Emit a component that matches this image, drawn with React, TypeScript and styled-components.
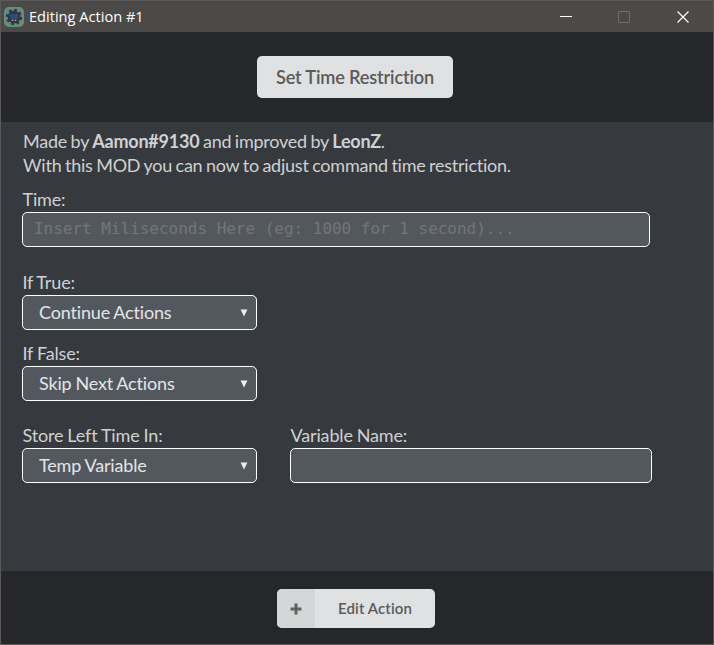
import React from "react";
import styled, { createGlobalStyle } from "styled-components";

const GlobalStyle = createGlobalStyle`
  * { box-sizing: border-box; }
  html, body, #root { height: 100%; margin: 0; }
  body { background: #36393e; overflow: hidden; }
`;

const Window = styled.div`
  height: 645px;
  width: 714px;
  display: flex;
  flex-direction: column;
  border: 1px solid #5b5a58;
  background: #36393e;
  color: #cfd1d2;
  font: 18px/24px Lato, sans-serif;
  font-variant-ligatures: none;
`;

const TitleBar = styled.header`
  flex: 0 0 31px;
  display: flex;
  align-items: center;
  padding-left: 3px;
  background: #4c4a48;
  color: #fff;
`;

const Title = styled.span`
  flex: 1;
  margin-left: 5px;
  font: 14.6px/20px "Open Sans", sans-serif;
  padding-bottom: 1px;
`;

const Control = styled.button<{ $dim?: boolean }>`
  width: 58px;
  height: 30px;
  padding: 0;
  border: 0;
  background: none;
  color: ${(p) => (p.$dim ? "#6f6e6c" : "#fff")};
  display: flex;
  align-items: center;
  justify-content: center;
`;

const Controls = styled.div`
  display: flex;
  padding-right: 2px;
`;

const Band = styled.div<{ $height: number; $top: number; $right: number }>`
  flex: 0 0 ${(p) => p.$height}px;
  display: flex;
  justify-content: center;
  align-items: flex-start;
  padding: ${(p) => p.$top}px ${(p) => p.$right}px 0 0;
  background: #25272a;
`;

const Heading = styled.h1`
  margin: 0;
  width: 196px;
  height: 42px;
  border-radius: 5px;
  background: #e0e1e2;
  color: #5a5a5a;
  font: 600 18.2px/42px Lato, sans-serif;
  font-variant-ligatures: none;
  letter-spacing: -0.17px;
  text-align: center;
`;

const Content = styled.main`
  flex: 1;
  padding: 7px 0 0 21px;
`;

const Intro = styled.p`
  margin: 0 0 10px 1px;
  white-space: nowrap;
  letter-spacing: -0.24px;
  word-spacing: -0.8px;
`;

const Row = styled.div<{ $gap: number }>`
  display: flex;
  column-gap: 33px;
  margin-bottom: ${(p) => p.$gap}px;
`;

const Field = styled.label<{ $width: number }>`
  display: flex;
  flex-direction: column;
  width: ${(p) => p.$width}px;
`;

const Caption = styled.span`
  height: 25px;
  padding-left: 0.5px;
  letter-spacing: -0.15px;
  word-spacing: -0.5px;
`;

const Input = styled.input`
  width: 100%;
  height: 35px;
  padding: 0 11px 2px;
  border: 1px solid #fff;
  border-radius: 5px;
  outline: 0;
  background: #53585f;
  color: #e0e1e2;
  font: 16px "DejaVu Sans Mono", monospace;
  letter-spacing: -0.02px;
  &::placeholder { color: #757575; opacity: 1; }
`;

const SelectBox = styled.div`
  display: flex;
  align-items: center;
  justify-content: space-between;
  height: 35px;
  padding: 0 8px 0 16px;
  border: 1px solid #fff;
  border-radius: 5px;
  background: #53585f;
  color: #e4e5e6;
  letter-spacing: -0.17px;
  word-spacing: -0.5px;
`;

const SelectText = styled.span`
  padding-bottom: 2px;
`;

const EditButton = styled.button`
  display: flex;
  width: 158px;
  height: 39px;
  padding: 0;
  border: 0;
  border-radius: 5px;
  overflow: hidden;
  background: #e0e1e2;
  color: #5a5a5a;
  font: 600 15px/39px Lato, sans-serif;
  font-variant-ligatures: none;
  letter-spacing: 0.1px;
`;

const IconCell = styled.span`
  width: 38px;
  height: 39px;
  display: flex;
  align-items: center;
  justify-content: center;
  background: #d5d6d7;
`;

const ButtonText = styled.span`
  flex: 1;
  text-align: center;
`;

function AppIcon() {
  return (
    <svg width="20" height="20" viewBox="0 0 20 20">
      <rect width="20" height="20" rx="5" fill="#668c7e" />
      <circle cx="10" cy="10" r="6.4" fill="#343740" />
      <circle cx="10" cy="10" r="7" fill="none" stroke="#343740" strokeWidth="2.4" strokeDasharray="2.75 2.75" />
      <path d="M6 7.5l1-1 1 .7h4l1-.7 1 1v3.2H6z" fill="#24518c" />
      <path d="M7 11h6v3H7z" fill="#484c59" />
      <path d="M8 13h1v1H8zM11 13h1v1h-1z" fill="#a5b6c0" />
    </svg>
  );
}

function Select({ label, value }: { label: string; value: string }) {
  return (
    <Field as="div" $width={235}>
      <Caption>{label}</Caption>
      <SelectBox role="combobox" aria-label={label}>
        <SelectText>{value}</SelectText>
        <svg width="8" height="8" viewBox="0 0 8 8">
          <path d="M.6.5h6.8L4 7.5z" fill="#eceded" />
        </svg>
      </SelectBox>
    </Field>
  );
}

export default function App() {
  return (
    <>
      <GlobalStyle />
      <Window>
        <TitleBar>
          <AppIcon />
          <Title>Editing Action #1</Title>
          <Controls>
            <Control aria-label="Minimize">
              <svg width="12" height="12"><path d="M0 5.5h12" stroke="currentColor" /></svg>
            </Control>
            <Control aria-label="Maximize" $dim>
              <svg width="12" height="12"><path d="M.5.5h11v11H.5z" fill="none" stroke="currentColor" /></svg>
            </Control>
            <Control aria-label="Close">
              <svg width="14" height="12"><path d="M2.5.5l11 11M13.5.5l-11 11" stroke="currentColor" strokeWidth="1.2" /></svg>
            </Control>
          </Controls>
        </TitleBar>
        <Band $height={90} $top={24} $right={4}>
          <Heading>Set Time Restriction</Heading>
        </Band>
        <Content>
          <Intro>
            Made by <b>Aamon#9130</b> and improved by <b>LeonZ</b>.<br />
            With this MOD you can now to adjust command time restriction.
          </Intro>
          <Row $gap={23}>
            <Field $width={628}>
              <Caption>Time:</Caption>
              <Input placeholder="Insert Miliseconds Here (eg: 1000 for 1 second)..." />
            </Field>
          </Row>
          <Row $gap={11}>
            <Select label="If True:" value="Continue Actions" />
          </Row>
          <Row $gap={22}>
            <Select label="If False:" value="Skip Next Actions" />
          </Row>
          <Row $gap={0}>
            <Select label="Store Left Time In:" value="Temp Variable" />
            <Field $width={362}>
              <Caption>Variable Name:</Caption>
              <Input aria-label="Variable Name" />
            </Field>
          </Row>
        </Content>
        <Band $height={73} $top={18} $right={2}>
          <EditButton>
            <IconCell>
              <svg width="12" height="12"><path d="M6 .5v11M.5 6h11" stroke="#5f5f5f" strokeWidth="3" /></svg>
            </IconCell>
            <ButtonText>Edit Action</ButtonText>
          </EditButton>
        </Band>
      </Window>
    </>
  );
}
